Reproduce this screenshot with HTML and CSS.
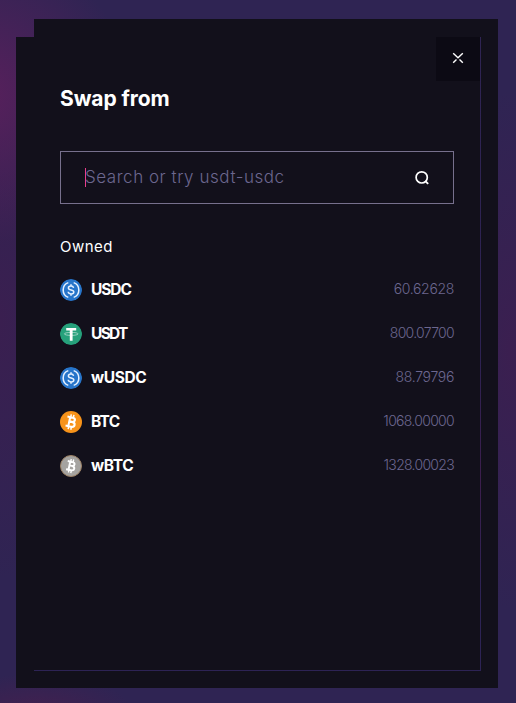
FILE: index.html
```
<!DOCTYPE html>
<html lang="en">
<head>
  <meta charset="UTF-8">
  <meta name="viewport" content="width=device-width, initial-scale=1.0">
  <title>Swap from</title>
  <link rel="stylesheet" href="styles.css">
</head>
<body>
  <svg class="sprite" aria-hidden="true">
    <symbol id="usdc" viewBox="0 0 22 22">
      <circle cx="11" cy="11" r="11" fill="#2775ca"/>
      <g fill="none" stroke="#e6f1ff" stroke-width="1.5">
        <path d="M8.3 3.6a7.9 7.9 0 0 0 0 14.8M13.7 3.6a7.9 7.9 0 0 1 0 14.8"/>
        <path d="M13.6 8.9c-.3-1.2-1.2-1.8-2.6-1.8-1.5 0-2.6.7-2.6 1.9 0 2.7 5.4 1.2 5.4 3.9 0 1.3-1.2 2-2.8 2s-2.7-.7-2.8-2.1M11 5.3v1.8M11 14.9v1.8"/>
      </g>
    </symbol>
    <symbol id="usdt" viewBox="0 0 22 22">
      <circle cx="11" cy="11" r="11" fill="#26a17b"/>
      <path d="M6.2 5h10v2.5h-3.6v10.3H9.8V7.5H6.2z" fill="#fff"/>
      <ellipse cx="11.2" cy="10.9" rx="6.9" ry="1.5" fill="none" stroke="#fff" stroke-width=".5"/>
    </symbol>
    <symbol id="coin-b" viewBox="0 0 22 22">
      <g fill="none" stroke="#fff" stroke-width="2.1" transform="rotate(12 11 11)">
        <path d="M9.2 6.4v9.2M6.4 6.4h5.4c3.5 0 3.5 4.3 0 4.3H9.2M11.8 10.7c4.4 0 4.4 4.9 0 4.9H6.4"/>
        <path d="M9.7 3.4v2.6M12.4 3.4v2.8M9.7 15.9v2.7M12.4 15.9v2.7" stroke-width="1.5"/>
      </g>
    </symbol>
  </svg>

  <div class="modal">
    <div class="modal-frame">
      <button class="close" type="button" aria-label="Close">
        <svg width="12" height="12" viewBox="0 0 12 12">
          <path d="M1.2 1.2 6 5.7l4.8-4.5M1.2 10.8l3.3-3.3M10.8 10.8 7.5 7.5" fill="none" stroke="#fff" stroke-width="1.4"/>
        </svg>
      </button>

      <h1 class="title">Swap from</h1>

      <div class="search">
        <span class="caret"></span>
        <input class="search-input" type="text" placeholder="Search or try usdt-usdc">
        <svg class="search-icon" width="16" height="16" viewBox="0 0 16 16">
          <circle cx="7.7" cy="7.4" r="5.6" fill="none" stroke="#fff" stroke-width="1.7"/>
          <path d="M11.2 11l3 2.8" stroke="#fff" stroke-width="1.8"/>
        </svg>
      </div>

      <h2 class="subtitle">Owned</h2>

      <ul class="tokens">
        <li class="token">
          <svg class="token-icon"><use href="#usdc"/></svg>
          <span class="token-name usdc">USDC</span>
          <span class="amount">60.62628</span>
        </li>
        <li class="token">
          <svg class="token-icon"><use href="#usdt"/></svg>
          <span class="token-name usdt">USDT</span>
          <span class="amount amount-tight">800.07700</span>
        </li>
        <li class="token">
          <svg class="token-icon"><use href="#usdc"/></svg>
          <span class="token-name wrapped">wUSDC</span>
          <span class="amount">88.79796</span>
        </li>
        <li class="token">
          <svg class="token-icon btc-icon"><use href="#coin-b"/></svg>
          <span class="token-name">BTC</span>
          <span class="amount amount-tight">1068.00000</span>
        </li>
        <li class="token">
          <svg class="token-icon wbtc-icon"><use href="#coin-b"/></svg>
          <span class="token-name wrapped">wBTC</span>
          <span class="amount amount-tight">1328.00023</span>
        </li>
      </ul>
    </div>
  </div>
</body>
</html>
```
FILE: styles.css
```
* {
  box-sizing: border-box;
}

body {
  margin: 0;
  height: 703px;
  padding: 19px 18px 15px 16px;
  overflow: hidden;
  font-family: Inter, "Open Sans", sans-serif;
  color: #fff;
  background:
    radial-gradient(ellipse 150px 150px at -20px 95px, #58205c, transparent),
    radial-gradient(ellipse 90px 260px at 0 320px, #3a1f50, transparent),
    radial-gradient(ellipse 100px 40px at 35px 714px, #43204f, transparent),
    radial-gradient(ellipse 70px 260px at 510px 350px, #3b1f50, transparent),
    #2f2453;
}

.sprite {
  display: none;
}

.modal {
  height: 669px;
  padding: 18px 17px 17px 18px;
  background: #12101b;
  clip-path: polygon(18px 0, 100% 0, 100% 100%, 0 100%, 0 18px, 18px 18px);
}

.modal-frame {
  display: flex;
  flex-direction: column;
  height: 634px;
  padding: 0 26px;
  border: solid #2c2253;
  border-width: 0 1px 1px 0;
  border-image: linear-gradient(#2f2453, #2d2252 50%, #3c1e4d 70%, #2d2355 88%) 1;
}

.close {
  display: flex;
  align-items: center;
  justify-content: center;
  align-self: flex-end;
  width: 44px;
  height: 44px;
  margin-right: -26px;
  padding: 0 0 2px;
  border: 0;
  background: #0c0a14;
}

.title {
  margin: 4px 0 0;
  font-size: 21px;
  line-height: 28px;
  font-weight: 650;
  letter-spacing: -0.1px;
}

.search {
  position: relative;
  display: flex;
  align-items: center;
  height: 53px;
  margin-top: 38px;
  padding: 0 23px 0 24px;
  border: 1px solid #77708d;
}

.caret {
  position: absolute;
  left: 24px;
  top: 16px;
  width: 1px;
  height: 19px;
  background: #e83e8c;
}

.search-input {
  flex: 1;
  min-width: 0;
  height: 24px;
  margin-top: -1px;
  padding: 0;
  border: 0;
  outline: 0;
  background: none;
  color: #fff;
  font: 300 17px/24px Inter, "Open Sans", sans-serif;
  letter-spacing: 0.54px;
}

.search-input::placeholder {
  color: #6c678f;
  opacity: 1;
}

.search-icon {
  flex: none;
}

.subtitle {
  margin: 33px 0 0;
  font-size: 15px;
  line-height: 20px;
  font-weight: 400;
  letter-spacing: 0.45px;
}

.tokens {
  display: flex;
  flex-direction: column;
  gap: 22px;
  margin: 22px 0 0;
  padding: 0;
  list-style: none;
}

.token {
  display: flex;
  align-items: center;
  height: 22px;
}

.token-icon {
  flex: none;
  width: 22px;
  height: 22px;
  margin-right: 9px;
  border-radius: 50%;
}

.btc-icon {
  background: #f7931a;
}

.wbtc-icon {
  background: #a5a3a0;
  border: 1px solid #9b8064;
}

.token-name {
  font-size: 15.5px;
  line-height: 22px;
  font-weight: 700;
  letter-spacing: -0.8px;
}

.token-name.usdc {
  letter-spacing: -1.1px;
}

.token-name.usdt {
  letter-spacing: -1.7px;
}

.token-name.wrapped {
  letter-spacing: -0.4px;
}

.amount {
  margin: -2px 0 0 auto;
  color: #6c678f;
  font-size: 14px;
  line-height: 22px;
  font-weight: 300;
  letter-spacing: -0.32px;
}

.amount-tight {
  letter-spacing: -0.7px;
}
```
